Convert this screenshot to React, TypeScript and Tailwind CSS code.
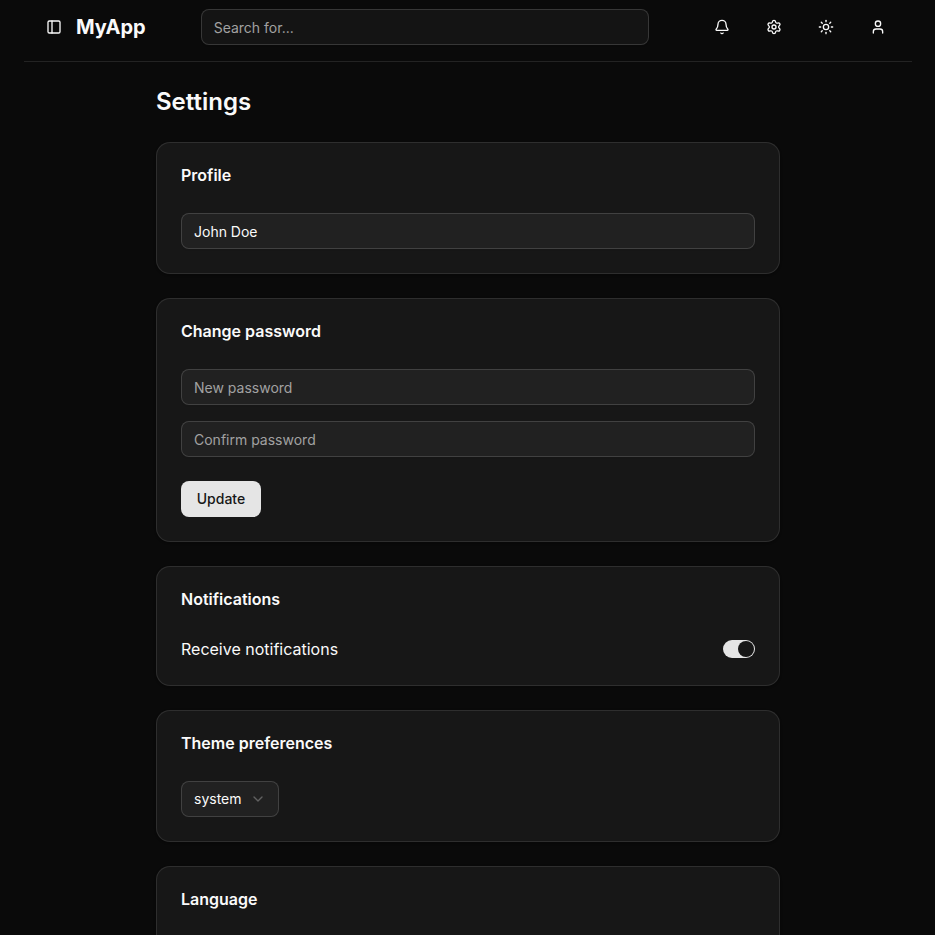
import type { ReactNode } from "react";
import { Bell, ChevronDown, PanelLeft, Settings, Sun, User } from "lucide-react";

const field =
  "block h-9 w-full rounded-lg border border-white/15 bg-white/[0.045] px-3 py-1 text-sm text-neutral-50 shadow-xs outline-none placeholder:text-[#a1a1a1]";

function Card({ title, children }: { title: string; children: ReactNode }) {
  return (
    <section className="flex flex-col gap-6 rounded-[14px] border border-white/10 bg-[#171717] p-6 shadow-sm">
      <h2 className="pb-1.5 text-base leading-4 font-semibold">{title}</h2>
      {children}
    </section>
  );
}

function IconButton({ label, children }: { label: string; children: ReactNode }) {
  return (
    <button aria-label={label} className="flex size-9 items-center justify-center rounded-lg">
      {children}
    </button>
  );
}

function SelectButton({ value }: { value: string }) {
  return (
    <button className="flex h-9 w-[98px] items-center justify-between rounded-lg border border-white/15 bg-white/[0.045] px-3 text-sm">
      {value}
      <ChevronDown size={16} className="text-[#a1a1a1] opacity-50" />
    </button>
  );
}

export default function App() {
  return (
    <div className="h-screen overflow-hidden bg-[#0a0a0a] font-['Inter',sans-serif] text-neutral-50">
      <header className="mx-6 flex h-[62px] w-[888px] items-start border-b border-white/10 pt-[9px]">
        <div className="ml-3 flex h-9 items-center">
          <IconButton label="Toggle sidebar"><PanelLeft size={16} /></IconButton>
          <span className="ml-1 text-xl font-bold">MyApp</span>
        </div>
        <input className={`${field} ml-[55px] max-w-md`} placeholder="Search for..." />
        <div className="ml-auto flex gap-4 pr-4">
          <IconButton label="Notifications"><Bell size={16} /></IconButton>
          <IconButton label="Settings"><Settings size={16} /></IconButton>
          <IconButton label="Theme"><Sun size={16} /></IconButton>
          <IconButton label="Account"><User size={16} /></IconButton>
        </div>
      </header>
      <main className="ml-[156px] flex w-[624px] flex-col gap-6 pt-6">
        <h1 className="text-2xl leading-8 font-semibold">Settings</h1>
        <Card title="Profile">
          <input className={field} defaultValue="John Doe" />
        </Card>
        <Card title="Change password">
          <div className="flex flex-col gap-4">
            <input className={field} type="password" placeholder="New password" />
            <input className={field} type="password" placeholder="Confirm password" />
          </div>
          <button className="h-9 w-20 rounded-lg bg-[#e5e5e5] text-sm font-medium text-[#171717]">Update</button>
        </Card>
        <Card title="Notifications">
          <div className="flex items-center justify-between">
            <span>Receive notifications</span>
            <button role="switch" aria-checked="true" className="flex h-[18px] w-8 items-center justify-end rounded-full bg-[#e5e5e5] p-px">
              <span className="size-4 rounded-full bg-[#171717]" />
            </button>
          </div>
        </Card>
        <Card title="Theme preferences">
          <SelectButton value="system" />
        </Card>
        <Card title="Language">
          <SelectButton value="" />
        </Card>
      </main>
    </div>
  );
}
